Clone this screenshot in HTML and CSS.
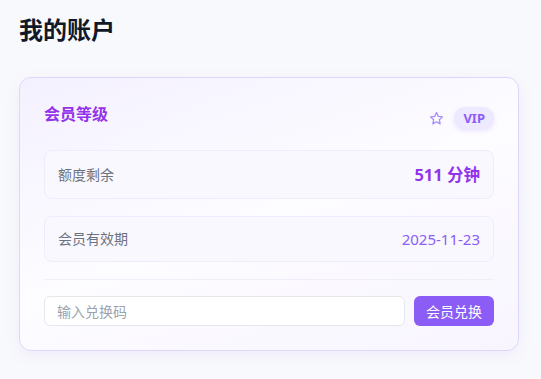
FILE: index.html
```html
<!DOCTYPE html>
<html lang="zh-CN">

<head>
    <meta charset="UTF-8" />
    <meta name="viewport" content="width=device-width, initial-scale=1.0" />
    <title>我的账户</title>
    <link rel="stylesheet" href="styles.css">
</head>

<body>
    <div class="page">
        <!-- 页面标题 -->
        <h1 class="page-title">我的账户</h1>

        <!-- 会员卡片 -->
        <div class="card">
            <div class="card-header">
                <h2 class="card-title">会员等级</h2>
                <div class="card-actions">
                    <svg class="star" width="15" height="15" viewBox="0 0 24 24" fill="none" stroke="currentColor"
                        stroke-width="2" stroke-linejoin="round">
                        <path d="M12 2.5l2.9 6.1 6.6.8-4.9 4.6 1.3 6.6L12 17.3l-5.9 3.3 1.3-6.6-4.9-4.6 6.6-.8z" />
                    </svg>
                    <span class="badge">VIP</span>
                </div>
            </div>

            <div class="info-row">
                <span class="info-label">额度剩余</span>
                <span class="info-value big">511 分钟</span>
            </div>

            <div class="info-row">
                <span class="info-label">会员有效期</span>
                <span class="info-value">2025-11-23</span>
            </div>

            <div class="divider"></div>

            <!-- 兑换码 -->
            <form class="redeem">
                <input type="text" class="redeem-input" placeholder="输入兑换码">
                <button type="submit" class="redeem-btn">会员兑换</button>
            </form>
        </div>
    </div>
</body>

</html>
```

FILE: styles.css
```css
/* 页面基础 */
body {
    margin: 0;
    background-color: #f8f9fc;
    font-family: "Noto Sans", "Noto Sans CJK SC", sans-serif;
    color: #1f2937;
}

.page {
    padding: 15px 19px;
    width: 500px;
}

.page-title {
    margin: 0 0 32px;
    font-size: 24px;
    line-height: 30px;
    font-weight: 700;
    color: #111827;
}

/* 卡片 */
.card {
    border: 1px solid #ddd6fe;
    border-radius: 12px;
    padding: 24px;
    background: linear-gradient(160deg, #f4f1ff 0%, #fdfcff 50%, #f8f5ff 100%);
    box-shadow: 0 4px 16px rgba(139, 92, 246, 0.08);
}

.card-header {
    display: flex;
    justify-content: space-between;
    align-items: flex-start;
    margin-bottom: 21px;
}

.card-title {
    margin: 0;
    font-size: 16px;
    line-height: 24px;
    font-weight: 700;
    color: #9333ea;
}

.card-actions {
    display: flex;
    align-items: center;
    gap: 10px;
    padding-top: 5px;
}

.star {
    color: #a78bfa;
}

.badge {
    display: inline-block;
    height: 22px;
    line-height: 22px;
    padding: 0 9px;
    border-radius: 11px;
    background-color: #ede9fe;
    color: #8b5cf6;
    font-size: 13px;
    font-weight: 700;
    box-shadow: 0 2px 4px rgba(139, 92, 246, 0.15);
}

/* 信息行 */
.info-row {
    display: flex;
    justify-content: space-between;
    align-items: center;
    padding: 14px 13px;
    border: 1px solid #f0ecfd;
    border-radius: 8px;
    background-color: #faf8ff;
    margin-bottom: 17px;
}

.info-row:last-of-type {
    margin-bottom: 0;
}

.info-label {
    font-size: 14px;
    line-height: 16px;
    color: #6b7280;
}

.info-value {
    font-size: 15px;
    line-height: 16px;
    color: #8b5cf6;
}

.info-value.big {
    font-size: 16.5px;
    line-height: 19px;
    font-weight: 700;
    color: #9333ea;
}

.divider {
    height: 1px;
    background-color: #f0eef8;
    margin: 15px 0 16px;
}

/* 兑换表单 */
.redeem {
    display: flex;
    gap: 9px;
    margin: 0;
}

.redeem-input {
    flex: 1;
    height: 30px;
    box-sizing: border-box;
    padding: 0 12px;
    border: 1px solid #e5e7eb;
    border-radius: 6px;
    background: #fff;
    font-family: inherit;
    font-size: 14px;
    outline: none;
}

.redeem-input::placeholder {
    color: #9ca3af;
}

.redeem-btn {
    width: 80px;
    height: 30px;
    border: none;
    border-radius: 6px;
    background-color: #8b5cf6;
    color: #fff;
    font-family: inherit;
    font-size: 14px;
    cursor: pointer;
}
```
